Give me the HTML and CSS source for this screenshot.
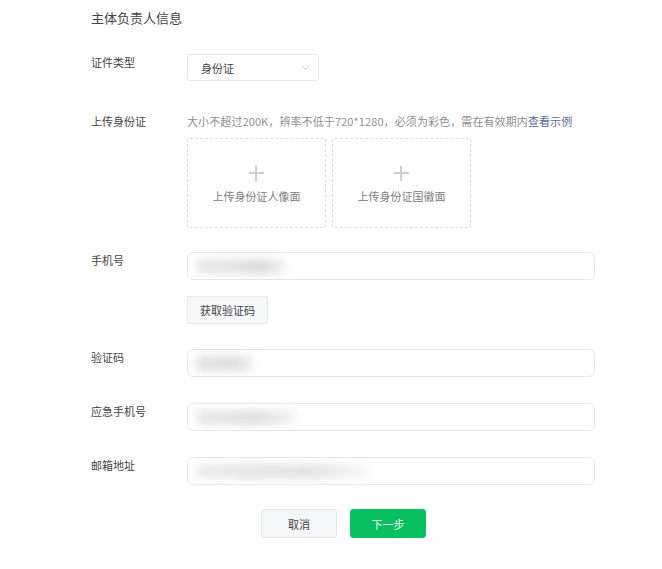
FILE: index.html
```html
<!doctype html>
<html lang="zh-CN">
  <head>
    <meta charset="UTF-8" />
    <meta name="viewport" content="width=device-width, initial-scale=1.0" />
    <title>主体负责人信息</title>
    <link rel="stylesheet" href="styles.css">
  </head>
  <body>
    <div class="owner-form">
      <h2 class="form-title">主体负责人信息</h2>

      <div class="form-row row-type">
        <label class="form-label">证件类型</label>
        <div class="form-field">
          <div class="select-box">
            <span>身份证</span>
            <svg class="select-arrow" width="9" height="6" viewBox="0 0 9 6"><path d="M1 1l3.5 3.5L8 1" fill="none" stroke="#c8c8c8" stroke-width="1"/></svg>
          </div>
        </div>
      </div>

      <div class="form-row row-upload">
        <label class="form-label">上传身份证</label>
        <div class="form-field">
          <p class="upload-tip">大小不超过200K，辨率不低于720*1280，必须为彩色，需在有效期内<a href="#">查看示例</a></p>
          <div class="upload-list">
            <div class="upload-card">
              <span class="upload-plus"></span>
              <span class="upload-text">上传身份证人像面</span>
            </div>
            <div class="upload-card">
              <span class="upload-plus"></span>
              <span class="upload-text">上传身份证国徽面</span>
            </div>
          </div>
        </div>
      </div>

      <div class="form-row row-phone">
        <label class="form-label">手机号</label>
        <div class="form-field">
          <div class="text-input"><span class="masked masked-phone"></span></div>
        </div>
      </div>

      <div class="form-row row-code-btn">
        <span class="form-label"></span>
        <div class="form-field">
          <button class="btn-light">获取验证码</button>
        </div>
      </div>

      <div class="form-row row-code">
        <label class="form-label">验证码</label>
        <div class="form-field">
          <div class="text-input"><span class="masked masked-code"></span></div>
        </div>
      </div>

      <div class="form-row row-spare">
        <label class="form-label">应急手机号</label>
        <div class="form-field">
          <div class="text-input"><span class="masked masked-spare"></span></div>
        </div>
      </div>

      <div class="form-row row-mail">
        <label class="form-label">邮箱地址</label>
        <div class="form-field">
          <div class="text-input"><span class="masked masked-mail"></span></div>
        </div>
      </div>

      <div class="form-actions">
        <button class="btn-cancel">取消</button>
        <button class="btn-primary">下一步</button>
      </div>
    </div>
  </body>
</html>
```

FILE: styles.css
```css
body {
  margin: 0;
  background: #fff;
  font-family: "Noto Sans CJK SC", "Microsoft YaHei", sans-serif;
  color: #444;
}

.owner-form {
  padding: 8px 0 0 91px;
}

.form-title {
  margin: 0;
  font-size: 13px;
  font-weight: normal;
  line-height: 20px;
  color: #444;
}

.form-row {
  display: grid;
  grid-template-columns: 96px 408px;
}

.row-type { margin-top: 26px; }
.row-upload { margin-top: 32px; }
.row-phone { margin-top: 24px; }
.row-code-btn { margin-top: 16px; }
.row-code { margin-top: 25px; }
.row-spare { margin-top: 26px; }
.row-mail { margin-top: 26px; }

.form-label {
  font-size: 11px;
  line-height: 16px;
  color: #444;
}

.select-box {
  box-sizing: border-box;
  width: 132px;
  height: 27px;
  padding: 0 8px 0 13px;
  border: 1px solid #e6e6e6;
  border-radius: 3px;
  display: flex;
  align-items: center;
  justify-content: space-between;
  font-size: 11px;
  color: #444;
}

.upload-tip {
  margin: 0;
  font-size: 11px;
  line-height: 16px;
  color: #8f8f8f;
  white-space: nowrap;
  letter-spacing: 0.1px;
}

.upload-tip a {
  color: #576b95;
  text-decoration: none;
}

.upload-list {
  display: flex;
  gap: 6px;
  margin-top: 9px;
}

.upload-card {
  box-sizing: border-box;
  width: 139px;
  height: 90px;
  border: 1px dashed #dcdcdc;
  border-radius: 3px;
  display: flex;
  flex-direction: column;
  align-items: center;
  padding-top: 27px;
}

.upload-plus {
  position: relative;
  width: 15px;
  height: 15px;
}

.upload-plus::before,
.upload-plus::after {
  content: "";
  position: absolute;
  background: #cfcfcf;
}

.upload-plus::before {
  left: 0;
  top: 6px;
  width: 15px;
  height: 2px;
}

.upload-plus::after {
  left: 6px;
  top: 0;
  width: 2px;
  height: 15px;
}

.upload-text {
  margin-top: 7px;
  font-size: 11px;
  line-height: 16px;
  color: #808080;
}

.text-input {
  box-sizing: border-box;
  height: 28px;
  border: 1px solid #e7e7e7;
  border-radius: 6px;
  display: flex;
  align-items: center;
  padding-left: 8px;
  overflow: hidden;
}

.masked {
  height: 15px;
  filter: blur(4px);
  border-radius: 2px;
}

.masked-phone {
  width: 92px;
  background: linear-gradient(90deg, #e8e8e8 0%, #e4e4e4 40%, #d9d9d9 70%, #f6f6f6 100%);
}

.masked-code {
  width: 60px;
  background: linear-gradient(90deg, #e2e2e2 0%, #dddddd 70%, #f8f8f8 100%);
}

.masked-spare {
  width: 100px;
  background: linear-gradient(90deg, #e8e8e8 0%, #dfdfdf 60%, #f4f4f4 100%);
}

.masked-mail {
  width: 172px;
  background: linear-gradient(90deg, #ededed 0%, #e5e5e5 35%, #e2e2e2 65%, #f8f8f8 100%);
}

.btn-light {
  box-sizing: border-box;
  width: 81px;
  height: 28px;
  border: 1px solid #e8e8e8;
  border-radius: 2px;
  background: #f5f6f7;
  font-family: inherit;
  font-size: 11px;
  color: #444;
  padding: 0;
}

.form-actions {
  display: flex;
  gap: 13px;
  margin: 24px 0 0 170px;
}

.form-actions button {
  box-sizing: border-box;
  width: 76px;
  height: 29px;
  border-radius: 3px;
  font-family: inherit;
  font-size: 11px;
  padding: 0;
}

.btn-cancel {
  border: 1px solid #e6e6e6;
  background: #f5f6f7;
  color: #444;
}

.btn-primary {
  border: 1px solid #07c160;
  background: #07c160;
  color: #fff;
}
```
